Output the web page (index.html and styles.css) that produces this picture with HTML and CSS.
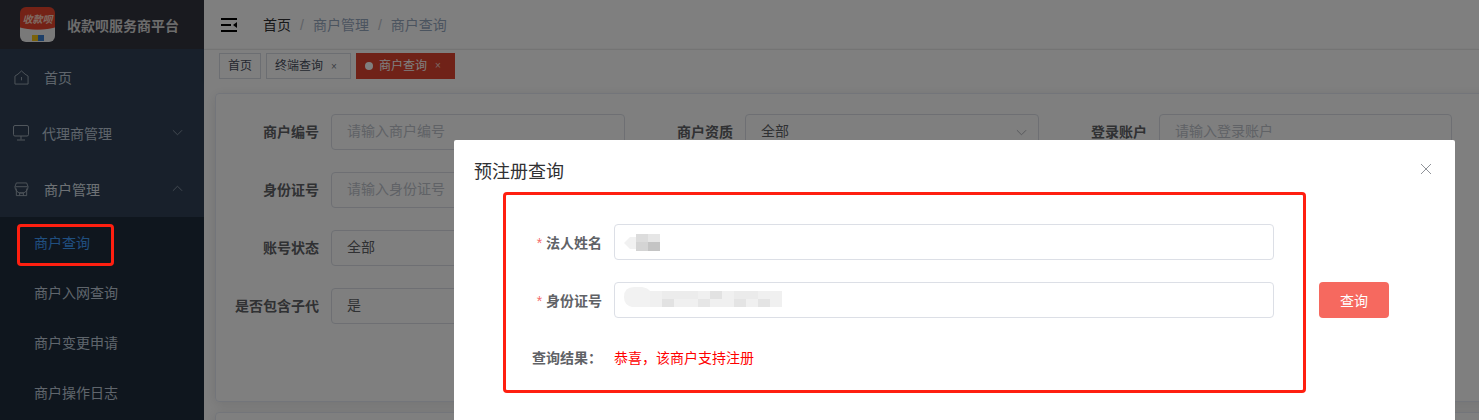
FILE: index.html
```html
<!DOCTYPE html>
<html lang="zh-CN">
<head>
  <meta charset="UTF-8">
  <title>商户查询</title>
  <link rel="stylesheet" href="styles.css">
</head>
<body>
  <div class="app">
    <aside class="sidebar">
      <div class="brand">
        <div class="logo">
          <span class="logo-text">收款呗</span>
          <span class="logo-marks"><i class="mark-y"></i><i class="mark-b"></i></span>
        </div>
        <span class="brand-name">收款呗服务商平台</span>
      </div>
      <ul class="menu">
        <li class="menu-item">
          <svg class="menu-icon" viewBox="0 0 16 16"><path d="M1 6.500Q4 5 8 1q4 4 7 5.500V15H1z"/><path d="M8 7.500v3.500"/></svg>
          <span>首页</span>
        </li>
        <li class="menu-item menu-wide">
          <svg class="menu-icon icon-big" viewBox="0 0 16 16"><rect x=".5" y=".5" width="15" height="10.500" rx="1.500"/><path d="M8 11v3.500M4 15h8"/></svg>
          <span>代理商管理</span>
          <svg class="chev" viewBox="0 0 12 7"><path d="m1 1 5 5 5-5"/></svg>
        </li>
        <li class="menu-item menu-open">
          <svg class="menu-icon" viewBox="0 0 16 16"><path d="M2.500 1h11l1.500 4a2 2 0 0 1-14 0z"/><path d="M2.500 7v7.500h11V7M1.500 5h13M6 14.500v-3h4v3"/></svg>
          <span>商户管理</span>
          <svg class="chev" viewBox="0 0 12 7"><path d="m1 6 5-5 5 5"/></svg>
        </li>
      </ul>
      <ul class="submenu">
        <li class="active">商户查询</li>
        <li>商户入网查询</li>
        <li>商户变更申请</li>
        <li>商户操作日志</li>
      </ul>
    </aside>

    <main class="main">
      <header class="navbar">
        <svg class="hamburger" viewBox="0 0 16 14"><path d="M0 1h16M0 7h10M0 13h16"/><path class="solid" d="M16 4v6l-4-3z"/></svg>
        <nav class="crumbs">
          <span class="crumb-first">首页</span><b>/</b><span>商户管理</span><b>/</b><span>商户查询</span>
        </nav>
      </header>
      <div class="tags">
        <span class="tag">首页</span>
        <span class="tag">终端查询<em>×</em></span>
        <span class="tag tag-active"><i></i>商户查询<em>×</em></span>
      </div>
      <section class="content">
        <div class="card">
          <form class="filters">
            <label>商户编号</label><div class="field ph">请输入商户编号</div>
            <label>商户资质</label>
            <div class="field">全部<svg class="chev select-chev" viewBox="0 0 12 7"><path d="m1 1 5 5 5-5"/></svg></div>
            <label>登录账户</label><div class="field ph">请输入登录账户</div>
            <label>身份证号</label><div class="field ph">请输入身份证号</div>
            <label></label><div></div><label></label><div></div>
            <label>账号状态</label><div class="field">全部</div>
            <label></label><div></div><label></label><div></div>
            <label>是否包含子代</label><div class="field">是</div>
          </form>
        </div>
        <div class="card card-next"></div>
      </section>
    </main>
  </div>

  <div class="overlay"></div>

  <div class="mark mark-menu"></div>

  <div class="dialog">
    <div class="dialog-head">
      <h2>预注册查询</h2>
      <svg class="close" viewBox="0 0 12 12"><path d="m1 1 10 10M11 1 1 11"/></svg>
    </div>
    <div class="dialog-body">
      <div class="query-box">
        <div class="query-row">
          <label><i>*</i> 法人姓名</label>
          <div class="query-input">
            <svg class="smudge" width="36" height="17" viewBox="0 0 36 17">
              <path fill="#f1f1f1" d="M0 9 6 3h6v12H6z"/>
              <rect x="12" y="0" width="12" height="8" fill="#dcdcdc"/>
              <rect x="24" y="0" width="12" height="8" fill="#e6e6e6"/>
              <rect x="12" y="8" width="12" height="9" fill="#d4d4d4"/>
              <rect x="24" y="8" width="12" height="9" fill="#c4c4c4"/>
            </svg>
          </div>
        </div>
        <div class="query-row">
          <label><i>*</i> 身份证号</label>
          <div class="query-input">
            <svg class="smudge smudge-id" width="158" height="20" viewBox="0 0 158 20">
              <path fill="#f2f2f2" d="M0 10Q0 0 10 0h8q6 1 8 4v16H8Q0 18 0 10z"/>
              <rect x="26" y="4" width="132" height="16" fill="#f0f0f0"/>
              <rect x="38" y="4" width="36" height="8" fill="#ececec"/>
              <rect x="86" y="4" width="12" height="8" fill="#e2e2e2"/>
              <rect x="110" y="4" width="24" height="8" fill="#ebebeb"/>
              <rect x="38" y="12" width="12" height="8" fill="#e2e2e2"/>
              <rect x="74" y="12" width="12" height="8" fill="#e6e6e6"/>
              <rect x="110" y="12" width="12" height="8" fill="#e4e4e4"/>
              <rect x="134" y="12" width="12" height="8" fill="#e4e4e4"/>
            </svg>
          </div>
        </div>
        <div class="query-result">
          <label>查询结果&#xFF1A;</label>
          <span>恭喜&#xFF0C;该商户支持注册</span>
        </div>
      </div>
      <button class="query-btn" type="button">查询</button>
    </div>
  </div>
</body>
</html>
```

FILE: styles.css
```css
* {
  box-sizing: border-box;
}
html, body {
  margin: 0;
  height: 420px;
  overflow: hidden;
}
body {
  font-family: "Liberation Sans", "Noto Sans CJK SC", sans-serif;
  font-size: 14px;
  color: #606266;
  background-color: #fff;
}
ul {
  list-style: none;
  margin: 0;
  padding: 0;
}
.app {
  display: flex;
  height: 420px;
}

/* sidebar */
.sidebar {
  width: 204px;
  flex: none;
  background-color: #304156;
  color: #bfcbd9;
}
.brand {
  height: 49px;
  display: flex;
  align-items: center;
  gap: 12px;
  padding-left: 20px;
  background-color: #32343f;
}
.logo {
  width: 35px;
  height: 35px;
  border-radius: 6px;
  overflow: hidden;
  position: relative;
  background: radial-gradient(ellipse 120% 66% at 50% 0, #e8452c 96%, #f2f2f2 100%);
}
.logo-text {
  display: block;
  font-family: "Liberation Serif", "Noto Sans CJK SC", serif;
  font-size: 10px;
  font-weight: bold;
  line-height: 12px;
  margin-top: 7px;
  text-align: center;
  font-style: italic;
  color: #ffd8c8;
  white-space: nowrap;
}
.logo-marks {
  position: absolute;
  left: 12px;
  bottom: 1px;
  display: flex;
}
.logo-marks i {
  width: 6px;
  height: 6px;
}
.mark-y { background-color: #f5c518; }
.mark-b { background-color: #3b7fd0; }
.brand-name {
  font-size: 14px;
  font-weight: bold;
  color: #d8d8d8;
}
.menu-item {
  height: 56px;
  display: flex;
  align-items: center;
  padding-left: 14px;
  position: relative;
}
.menu-item span {
  margin-left: 15px;
}
.menu-wide span {
  margin-left: 13px;
}
.menu-open {
  color: #dde3ea;
}
.menu-icon {
  width: 15px;
  height: 15px;
  fill: none;
  stroke: #a0acb8;
  stroke-width: 1;
}
.icon-big {
  width: 16px;
  height: 16px;
  margin-left: -1px;
}
.chev {
  width: 11px;
  height: 7px;
  fill: none;
  stroke: #8c99a8;
  stroke-width: 1;
}
.menu-item .chev {
  position: absolute;
  right: 21px;
  top: 24px;
}
.submenu {
  background-color: #1f2d3d;
  height: 203px;
}
.submenu li {
  height: 50px;
  line-height: 52px;
  padding-left: 34px;
}
.submenu .active {
  color: #409eff;
}

/* top bars */
.main {
  flex: 1;
  min-width: 0;
  display: flex;
  flex-direction: column;
}
.navbar {
  height: 50px;
  flex: none;
  display: flex;
  align-items: center;
  padding-left: 17px;
}
.hamburger {
  width: 16px;
  height: 14px;
  fill: none;
  stroke: #000;
  stroke-width: 2;
}
.hamburger .solid {
  fill: #000;
  stroke: none;
}
.crumbs {
  margin-left: 26px;
  padding-bottom: 2px;
  color: #97a8be;
  display: flex;
  align-items: baseline;
  white-space: nowrap;
}
.crumbs .crumb-first {
  color: #303133;
}
.crumbs b {
  font-weight: normal;
  color: #c0c4cc;
  margin: 0 9px;
}
.tags {
  height: 32px;
  flex: none;
  display: flex;
  gap: 5px;
  padding: 3px 15px 0;
  border-top: 1px solid #e8e8e8;
  margin-top: -1px;
  box-shadow: 0 1px 3px rgba(0, 0, 0, .14);
  font-size: 12px;
}
.tag {
  height: 26px;
  line-height: 24px;
  padding: 0 8px;
  border: 1px solid #d8dce5;
  color: #495060;
  white-space: nowrap;
}
.tag em {
  font-style: normal;
  font-size: 10px;
  margin: 0 5px 0 8px;
  opacity: .75;
}
.tag-active {
  display: flex;
  align-items: center;
  background-color: #e04530;
  border-color: #e04530;
  color: #fff;
}
.tag-active i {
  width: 8px;
  height: 8px;
  border-radius: 50%;
  background-color: #fff;
  margin-right: 6px;
}

/* filter card */
.content {
  flex: 1;
  min-height: 0;
  overflow: hidden;
  padding: 12px 0 0 11px;
  background-color: #fff;
}
.card {
  border: 1px solid #e6ebf5;
  border-radius: 4px;
  height: 309px;
  width: 1290px;
  box-shadow: 0 2px 12px rgba(0, 0, 0, .1);
  padding-top: 20px;
}
.card-next {
  margin-top: 10px;
}
.filters {
  display: grid;
  grid-template-columns: 115px 294px 120px 294px 120px 293px;
  grid-auto-rows: 36px;
  row-gap: 22px;
  align-items: center;
}
.filters label {
  font-weight: bold;
  text-align: right;
  padding-right: 12px;
  white-space: nowrap;
  color: #606266;
  margin-top: -2px;
}
.field {
  height: 36px;
  line-height: 32px;
  border: 1px solid #dcdfe6;
  border-radius: 4px;
  padding: 0 15px;
  position: relative;
}
.ph {
  color: #c0c4cc;
}
.select-chev {
  position: absolute;
  right: 11px;
  top: 14px;
  stroke: #a8abb2;
}

/* dialog layer */
.overlay {
  position: absolute;
  inset: 0;
  background-color: rgba(0, 0, 0, .5);
}
.mark {
  position: absolute;
  border: 3px solid #ff1f10;
  border-radius: 4px;
}
.mark-menu {
  left: 17px;
  top: 224px;
  width: 97px;
  height: 42px;
}
.dialog {
  position: absolute;
  left: 454px;
  top: 140px;
  width: 1001px;
  height: 280px;
  background-color: #fff;
  border-radius: 2px 2px 0 0;
}
.dialog-head {
  height: 52px;
  padding: 20px 20px 0;
  position: relative;
}
.dialog-head h2 {
  margin: 0;
  font-size: 18px;
  font-weight: normal;
  line-height: 24px;
  color: #303133;
}
.close {
  position: absolute;
  right: 23px;
  top: 23px;
  width: 12px;
  height: 12px;
  fill: none;
  stroke: #909399;
  stroke-width: 1;
}
.dialog-body {
  display: flex;
  align-items: flex-start;
  padding-left: 49px;
}
.query-box {
  width: 803px;
  height: 201px;
  border: 3px solid #ff1f10;
  border-radius: 4px;
  padding: 29px 0 0 26px;
}
.query-row {
  display: flex;
  align-items: center;
  height: 36px;
  margin-bottom: 22px;
}
.query-row label {
  width: 70px;
  font-weight: bold;
  white-space: nowrap;
  text-align: right;
}
.query-row label i {
  color: #f56c6c;
  font-style: normal;
  font-weight: normal;
}
.query-input {
  width: 660px;
  height: 36px;
  margin-left: 12px;
  border: 1px solid #dcdfe6;
  border-radius: 4px;
  display: flex;
  align-items: center;
  padding-left: 9px;
}
.smudge-id {
  margin-bottom: 6px;
}
.query-result {
  display: flex;
  margin-top: 30px;
  font-size: 14px;
  line-height: 20px;
}
.query-result label {
  width: 82px;
  font-weight: bold;
  white-space: nowrap;
}
.query-result span {
  color: #ff0000;
}
.query-btn {
  width: 70px;
  height: 36px;
  margin: 90px 0 0 13px;
  background-color: #f6695f;
  border: none;
  border-radius: 4px;
  color: #fff;
  font: inherit;
  font-size: 14px;
}
```
